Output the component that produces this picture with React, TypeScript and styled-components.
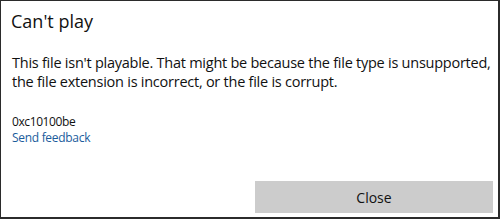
import React from "react";
import styled, {createGlobalStyle} from "styled-components";

const GlobalStyle = createGlobalStyle`
  html, body {
    margin: 0;
    padding: 0;
    background: #ffffff;
  }
  body {
    font-family: "Open Sans", "Noto Sans", sans-serif;
  }
`

export default function App() {
    return (
        <>
            <GlobalStyle/>
            <Dialog>
                <Title>Can&apos;t play</Title>
                <Message>
                    This file isn&apos;t playable. That might be because the file type is unsupported,
                    the file extension is incorrect, or the file is corrupt.
                </Message>
                <ErrorCode>0xc10100be</ErrorCode>
                <FeedbackLink href="#">Send feedback</FeedbackLink>
                <ButtonRow>
                    <span/>
                    <CloseButton>Close</CloseButton>
                </ButtonRow>
            </Dialog>
        </>
    )
}

const Dialog = styled.div`
  box-sizing: border-box;
  width: 500px;
  height: 219px;
  border-style: solid;
  border-color: #2b2b2b;
  border-width: 1px 2px 2px 1px;
  padding: 0 5px 4px 11px;
  display: flex;
  flex-direction: column;
  color: #111111;
`
const Title = styled.h1`
  margin: 8px 0 0 -1px;
  font-size: 18px;
  line-height: 24px;
  font-weight: 400;
`
const Message = styled.p`
  margin: 20px 0 0;
  font-size: 14.5px;
  letter-spacing: -0.25px;
  line-height: 19px;
  width: 486px;
`
const ErrorCode = styled.div`
  margin-top: 22px;
  font-size: 12px;
  letter-spacing: -0.4px;
  line-height: 17px;
`
const FeedbackLink = styled.a`
  align-self: flex-start;
  font-size: 12px;
  letter-spacing: -0.3px;
  line-height: 16px;
  color: #1a5c9c;
  text-decoration: none;
`
const ButtonRow = styled.div`
  margin-top: auto;
  display: grid;
  grid-template-columns: 1fr 238px;
  gap: 6px;
`
const CloseButton = styled.button`
  height: 32px;
  border: none;
  background: #cccccc;
  font-family: inherit;
  font-size: 14px;
  color: #111111;
  padding: 0;
`
